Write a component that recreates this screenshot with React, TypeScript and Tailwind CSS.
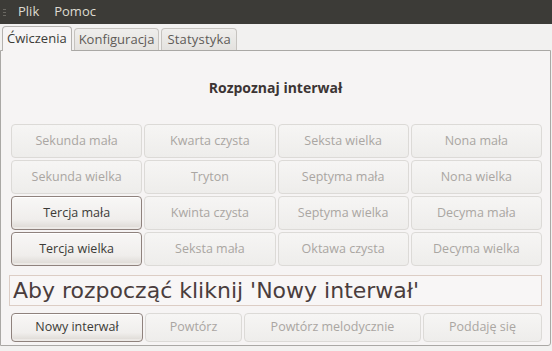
const font = { fontFamily: '"Open Sans", "Noto Sans", sans-serif' };

const rows = [
	["Sekunda mała", "Kwarta czysta", "Seksta wielka", "Nona mała"],
	["Sekunda wielka", "Tryton", "Septyma mała", "Nona wielka"],
	["Tercja mała", "Kwinta czysta", "Septyma wielka", "Decyma mała"],
	["Tercja wielka", "Seksta mała", "Oktawa czysta", "Decyma wielka"],
];
const enabled = ["Tercja mała", "Tercja wielka"];

const Btn = ({ label, on, className = "" }: { label: string; on: boolean; className?: string }) => (
	<div
		className={
			"flex items-center justify-center rounded-[4px] border text-[12.5px] " +
			(on
				? "border-[#8f827d] bg-gradient-to-b from-[#f8f7f6] via-[#f0eeec] via-70% to-[#dcd8d3] text-[#3c3b37] shadow-[inset_0_1px_0_#ffffff,inset_0_-2px_0_#ece9e6] "
				: "border-[#dcdad7] bg-gradient-to-b from-[#f6f5f4] to-[#eeedeb] text-[#aaa6a2] ") +
			className
		}
	>
		{label}
	</div>
);

export default function App() {
	return (
		<div className="w-[552px] h-[351px] bg-[#f2f1f0] flex flex-col overflow-hidden" style={font}>
			<div className="h-6 bg-[#3c3b37] flex items-center text-[13px] text-[#dfdbd2]">
				<div className="w-[3px] ml-[3px] mr-[12px] flex flex-col gap-[2px]">
					<div className="h-px bg-[#6a6862]" />
					<div className="h-px bg-[#6a6862]" />
					<div className="h-px bg-[#6a6862]" />
				</div>
				<span className="mr-[15px]">Plik</span>
				<span>Pomoc</span>
			</div>
			<div className="flex items-end h-[26px] pl-[2px] gap-[2px] text-[13px]">
				<div className="h-[25px] px-[4px] flex items-center border border-b-0 border-[#b4b2af] rounded-t-[4px] bg-[#f6f4f4] text-[#3c3b37] relative -mb-px z-10">
					Ćwiczenia
				</div>
				<div className="h-[22px] px-[4px] flex items-center border border-b-0 border-[#c6c3bf] rounded-t-[4px] bg-gradient-to-b from-[#efeeec] to-[#e4e2df] text-[#5e5a57]">
					Konfiguracja
				</div>
				<div className="h-[22px] px-[5px] flex items-center border border-b-0 border-[#c6c3bf] rounded-t-[4px] bg-gradient-to-b from-[#efeeec] to-[#e4e2df] text-[#5e5a57] tracking-[0.2px]">
					Statystyka
				</div>
			</div>
			<div className="w-[551px] h-[296px] border border-[#aaa8a5] rounded-br-[3px] bg-[#f6f4f4] flex flex-col">
				<div className="h-[73px] flex items-center justify-center text-[14px] font-bold text-[#3c3434]">
					Rozpoznaj interwał
				</div>
				<div className="grid grid-cols-4 gap-x-[2px] gap-y-[2px] pl-[10px] pr-[8px]">
					{rows.flat().map((l) => (
						<Btn key={l} label={l} on={enabled.includes(l)} className="h-[34px]" />
					))}
				</div>
				<div
					className="mt-[9px] mx-[8px] h-[31px] border border-[#dccdc5] bg-[#f8f6f6] flex items-center pl-[3px] text-[22px] text-[#4a3d3d]"
					style={{ fontFamily: '"DejaVu Sans", sans-serif' }}
				>
					Aby rozpocząć kliknij 'Nowy interwał'
				</div>
				<div className="flex gap-[2px] mt-[7px] pl-[10px] pr-[8px]">
					<Btn label="Nowy interwał" on className="h-[29px] w-[132px]" />
					<Btn label="Powtórz" on={false} className="h-[29px] w-[97px]" />
					<Btn label="Powtórz melodycznie" on={false} className="h-[29px] w-[177px]" />
					<Btn label="Poddaję się" on={false} className="h-[29px] flex-1" />
				</div>
			</div>
		</div>
	);
}
